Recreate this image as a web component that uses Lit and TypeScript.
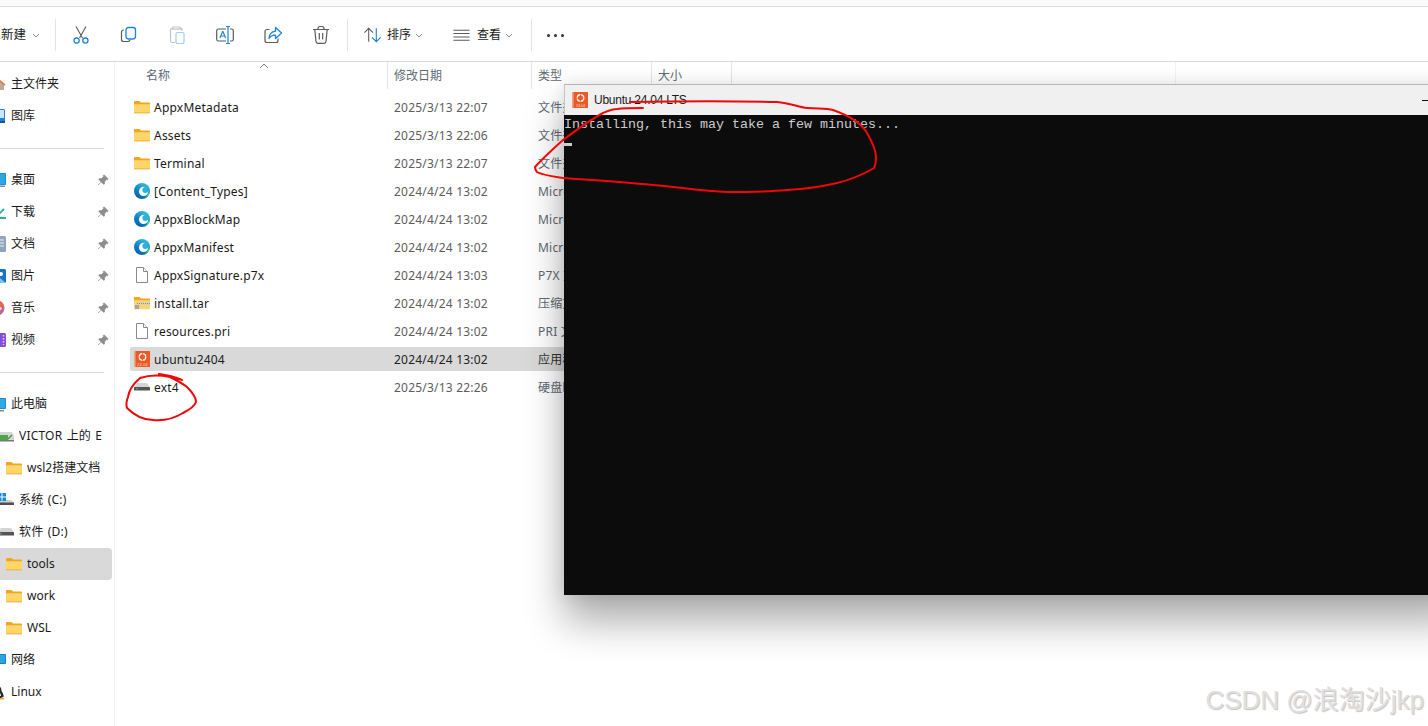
import { LitElement, html, css, svg } from "lit";
import { customElement } from "lit/decorators.js";

const folder = () => html`<svg class="ic" viewBox="0 0 16 16"><path d="M0 3.2C0 2.5.5 2 1.2 2h4.2l1.8 1.6H15c.6 0 1 .4 1 1V6H0z" fill="#f2a51e"/><path d="M0 5.2h16v8c0 .6-.4 1-1 1H1c-.6 0-1-.4-1-1z" fill="#fdd66b"/><path d="M0 13.400h16v.3c0 .4-.4.6-1 .6H1c-.6 0-1-.2-1-.6z" fill="#eba726"/></svg>`;
const edge = () => html`<svg class="ic" viewBox="0 0 16 16"><defs><linearGradient id="eg" x1=".7" y1="0" x2=".2" y2="1"><stop offset="0" stop-color="#35c1dc"/><stop offset=".5" stop-color="#1285cf"/><stop offset="1" stop-color="#0a5ca8"/></linearGradient></defs><circle cx="8" cy="8" r="8" fill="url(#eg)"/><circle cx="9.600" cy="8.400" r="4.600" fill="#fff"/><circle cx="11.400" cy="6.900" r="3" fill="#2bb0dc"/><path d="M15.900 9A8 8 0 0 1 8.500 16C11.500 15.200 13 13.800 13.600 10.700z" fill="#43d07c"/></svg>`;
const file = () => html`<svg class="ic" viewBox="0 0 16 16"><path d="M2.500.5h7l4 4v11h-11z" fill="#fff" stroke="#8a8a8a"/><path d="M9.500.5v4h4" fill="#f3f3f3" stroke="#8a8a8a"/></svg>`;
const zip = () => html`<svg class="ic" viewBox="0 0 16 16"><path d="M0 3.2C0 2.5.5 2 1.2 2h4.2l1.8 1.6H15c.6 0 1 .4 1 1V6H0z" fill="#f2a51e"/><path d="M0 5.2h16v8c0 .6-.4 1-1 1H1c-.6 0-1-.4-1-1z" fill="#fdd66b"/><path d="M3 7h13v3H3z" fill="#d8d2b8"/><path d="M3 8.500h13" stroke="#8f8f7f" stroke-dasharray="1 1"/><rect x="1" y="10" width="4" height="4" fill="#a5a5a5"/></svg>`;
const ubuntu = () => html`<svg class="ic" viewBox="0 0 16 16"><rect width="16" height="16" fill="#ea5a26"/><rect width="1.600" height="16" fill="#f2a285"/><circle cx="8.500" cy="6" r="3.300" fill="none" stroke="#fff" stroke-width="1.300" stroke-dasharray="4.400 .8"/><text x="8.500" y="14.600" font-size="4" font-family="Liberation Sans" fill="#fbd3c3" text-anchor="middle">24.04</text></svg>`;
const drive = () => html`<svg class="ic" viewBox="0 0 16 16"><path d="M3 4h10l3 4.500H0z" fill="#d4d4d4"/><rect x="0" y="8" width="16" height="3.500" rx=".6" fill="#555"/><rect x="2" y="9.300" width="1.800" height="1" fill="#3fd648"/></svg>`;

const tool = (c: unknown) => html`<svg class="tool" viewBox="0 0 20 20" fill="none" stroke-width="1.100">${c}</svg>`;
const GR = "#5a5a5a", BL = "#1e82dc";
const cut = svg`<path d="M5 1.500 11.500 13M15 1.500 8.500 13" stroke=${GR}/><circle cx="5.600" cy="15.600" r="2.600" stroke=${BL} stroke-width="1.300"/><circle cx="14.400" cy="15.600" r="2.600" stroke=${BL} stroke-width="1.300"/>`;
const copy = svg`<path d="M5 5H4.500A2 2 0 0 0 2.500 7v7.500a2 2 0 0 0 2 2H9a2 2 0 0 0 2-1.500" stroke=${GR} stroke-width="1.200"/><rect x="7" y="2.500" width="9.500" height="11.500" rx="2.400" stroke=${BL} stroke-width="1.300"/>`;
const paste = svg`<path d="M6 3.500H5A1.500 1.500 0 0 0 3.500 5v11A1.500 1.500 0 0 0 5 17.500h3M6.500 2h6a.8.8 0 0 1 .8.8V4.200H5.700V2.800A.8.8 0 0 1 6.500 2zM13.500 3.500h1.500V6" stroke="#c3c3c3" stroke-width="1.200"/><rect x="9" y="7.500" width="8" height="11" rx="1.600" stroke="#a4cdf2" stroke-width="1.200"/>`;
const rename = svg`<path d="M11 4H3.500A1.800 1.800 0 0 0 1.700 5.800v8.400A1.800 1.800 0 0 0 3.500 16H11M15 4h1.500a1.800 1.800 0 0 1 1.800 1.800v8.400a1.800 1.800 0 0 1-1.800 1.800H15" stroke=${GR} stroke-width="1.200"/><path d="M11 1.500h4M13 1.500v17M11 18.500h4M5 13l2.600-6.500h.4L10.600 13M6 11h3.600" stroke=${BL} stroke-width="1.200"/>`;
const share = svg`<path d="M6.500 4.500H4A2 2 0 0 0 2 6.500v9A2 2 0 0 0 4 17.500h9A2 2 0 0 0 15 15.500V13.500" stroke=${GR} stroke-width="1.200"/><path d="M12.500 2.500 18.500 8l-6 5.500V10.200C9.500 10 7.500 11.200 6 13.500c.2-4 2.700-6.800 6.500-7.300z" stroke=${BL} stroke-width="1.300" stroke-linejoin="round"/>`;
const trash = svg`<path d="M2 4.500h16M7 4.500V3.400A1.900 1.900 0 0 1 8.900 1.500h2.200A1.900 1.900 0 0 1 13 3.400v1.100M3.800 4.500 5 16.500a2 2 0 0 0 2 1.800h6a2 2 0 0 0 2-1.800l1.200-12M8.300 8v6.500M11.700 8v6.500" stroke=${GR} stroke-width="1.200"/>`;
const sortI = svg`<path d="M6 17V3M1.500 7.500 6 3l4.500 4.500" stroke=${GR} stroke-width="1.100"/><path d="M14 3v14M9.500 12.500 14 17l4.500-4.500" stroke=${BL} stroke-width="1.200"/>`;
const viewI = svg`<path d="M1.500 5h17M1.500 8.500h17M1.500 12h17M1.500 15.500h17" stroke=${GR} stroke-width="1.100"/>`;
const chev = html`<svg class="chev" viewBox="0 0 8 5" fill="none"><path d="M1 1l3 3 3-3" stroke="#8a8a8a"/></svg>`;

const navSvg = (c: unknown) => html`<svg class="ic" viewBox="0 0 16 16">${c}</svg>`;
const nav: Record<string, unknown> = {
  home: navSvg(svg`<path d="M2 14V8l6-5 6 5v6z" fill="#b5aca6"/><path d="M.5 8.500 8 2l7.500 6.500-1 1.200L8 4.200l-6.500 5.500z" fill="#e8763a"/>`),
  gallery: navSvg(svg`<rect x="1" y="1" width="14" height="14" rx="1.500" fill="#2a7fd0"/><rect x="10" y="2" width="4" height="8" fill="#cde3f6"/><path d="M8 13h7v2H8z" fill="#0e5aa8"/>`),
  desk: navSvg(svg`<rect y="1" width="16" height="12" rx="1" fill="#1a8cd8"/><rect x="10" y="2" width="5" height="10" fill="#2fa6e0"/><rect x="1" y="13.500" width="14" height="1.500" fill="#888899"/>`),
  down: navSvg(svg`<path d="M8 11l6-6" stroke="#1fb58f" stroke-width="1.800"/><path d="M3 14h13" stroke="#1fb58f" stroke-width="1.800"/>`),
  docs: navSvg(svg`<rect x="1" y="0" width="15" height="16" rx="1.500" fill="#8fa3bd"/><path d="M8 4h6M8 7h6M8 10h6" stroke="#eef2f7"/>`),
  pics: navSvg(svg`<rect y="1" width="16" height="14" rx="1.500" fill="#1973c7"/><circle cx="11" cy="6" r="2" fill="#fff"/><path d="M4 15l6-5 6 5z" fill="#7fc1ee"/>`),
  music: navSvg(svg`<circle cx="7" cy="8" r="7.500" fill="#c7638a"/><path d="M7 .500a7.500 7.500 0 0 1 7.400 6H8z" fill="#e86a4a"/><circle cx="10" cy="8.500" r="1.800" fill="#f4d9e2"/>`),
  video: navSvg(svg`<rect y="1" width="16" height="14" rx="1.500" fill="#8250d6"/><path d="M13.500 3v10" stroke="#e3d5fa" stroke-width="1.500" stroke-dasharray="1.500 1.500"/>`),
  pc: navSvg(svg`<rect y="2" width="16" height="11" rx="1" fill="#1a8cd8"/><rect x="9" y="3" width="6" height="9" fill="#32a8e2"/><rect x="2" y="14" width="12" height="1.500" fill="#888"/>`),
  net: navSvg(svg`<rect y="2" width="16" height="10" rx="1" fill="#1680cc"/><rect x="7" y="3" width="8" height="8" fill="#2fa3de"/><path d="M0 14.500h6" stroke="#777"/>`),
  linux: navSvg(svg`<path d="M8 2c3 0 3.500 3 3.500 5 1 1.500 2.500 4 2 6l-3 1H6L2.500 13c-.3-2 1.200-4.500 2-6C4.500 5 5 2 8 2z" fill="#2b2b2b"/><path d="M8 8c2 0 3 2 3 4H5c0-2 1-4 3-4z" fill="#f3f3f3"/><path d="M7 14h7v1.500H7z" fill="#e8a91c"/>`),
  vic: navSvg(svg`<path d="M2 4h12l2 4v5H0V8z" fill="#d5d5d5"/><rect y="7" width="10" height="5" rx=".6" fill="#4aa84a"/><path d="M10 11l4-4" stroke="#3a9a3a" stroke-width="1.300"/><rect y="12" width="16" height="1.500" fill="#777"/>`),
  win: navSvg(svg`<path d="M3 8h10l3 3v1.500H0V11z" fill="#cfcfcf"/><rect y="10.500" width="16" height="2.500" fill="#4f4f4f"/><path d="M0 1h3.500v3.500H0zM4.500 1H8v3.500H4.500zM0 5.500h3.500V9H0zM4.500 5.500H8V9H4.500z" fill="#0f8be0"/>`),
};

type NavRow = { t: string; i: unknown; lvl: number; pin?: boolean; sel?: boolean } | null;
const navRows: NavRow[] = [
  { t: "主文件夹", i: nav.home, lvl: 0 },
  { t: "图库", i: nav.gallery, lvl: 0 },
  null,
  { t: "桌面", i: nav.desk, lvl: 0, pin: true },
  { t: "下载", i: nav.down, lvl: 0, pin: true },
  { t: "文档", i: nav.docs, lvl: 0, pin: true },
  { t: "图片", i: nav.pics, lvl: 0, pin: true },
  { t: "音乐", i: nav.music, lvl: 0, pin: true },
  { t: "视频", i: nav.video, lvl: 0, pin: true },
  null,
  { t: "此电脑", i: nav.pc, lvl: 0 },
  { t: "VICTOR 上的 E", i: nav.vic, lvl: 1 },
  { t: "wsl2搭建文档", i: folder(), lvl: 2 },
  { t: "系统 (C:)", i: nav.win, lvl: 1 },
  { t: "软件 (D:)", i: drive(), lvl: 1 },
  { t: "tools", i: folder(), lvl: 2, sel: true },
  { t: "work", i: folder(), lvl: 2 },
  { t: "WSL", i: folder(), lvl: 2 },
  { t: "网络", i: nav.net, lvl: 0 },
  { t: "Linux", i: nav.linux, lvl: 0 },
];

const files: [string, () => unknown, string, string, boolean?][] = [
  ["AppxMetadata", folder, "2025/3/13 22:07", "文件夹"],
  ["Assets", folder, "2025/3/13 22:06", "文件夹"],
  ["Terminal", folder, "2025/3/13 22:07", "文件夹"],
  ["[Content_Types]", edge, "2024/4/24 13:02", "Microsoft Edge"],
  ["AppxBlockMap", edge, "2024/4/24 13:02", "Microsoft Edge"],
  ["AppxManifest", edge, "2024/4/24 13:02", "Microsoft Edge"],
  ["AppxSignature.p7x", file, "2024/4/24 13:03", "P7X 文件"],
  ["install.tar", zip, "2024/4/24 13:02", "压缩文件"],
  ["resources.pri", file, "2024/4/24 13:02", "PRI 文件"],
  ["ubuntu2404", ubuntu, "2024/4/24 13:02", "应用程序", true],
  ["ext4", drive, "2025/3/13 22:26", "硬盘映像"],
];

const pin = html`<svg class="pin" viewBox="0 0 12 12"><path d="M7 .8 11.200 5 10.300 5.800 9.700 5.500 7.600 7.500 7.400 10 6.500 10.300 1.800 5.600 2.100 4.700 4.600 4.500 6.600 2.400 6.300 1.700zM3.800 8.300 1 11" fill="#8d8d8d" stroke="#8d8d8d" stroke-width=".7"/></svg>`;

@customElement("app-root")
export class AppRoot extends LitElement {
  static styles = css`
    :host { display: block; position: relative; width: 1428px; height: 726px; overflow: hidden; background: #fff;
      font: 12px/16px "Noto Sans", "Noto Sans CJK SC", sans-serif; color: #1a1a1a; }
    * { box-sizing: border-box; }
    .ic { width: 16px; height: 16px; flex: none; display: block; }
    .strip { height: 7px; background: #fafafa; border-bottom: 1px solid #dcdcdc; }
    .toolbar { height: 55px; display: flex; align-items: center; border-bottom: 1px solid #d6d6d6; background: #fff; padding-top: 2px; }
    .new { width: 55px; display: flex; align-items: center; gap: 2px; padding-left: 1px; font-size: 12.5px; }
    .sep { width: 1px; height: 32px; background: #e4e4e4; flex: none; }
    .tbtn { width: 48px; display: flex; justify-content: center; flex: none; }
    .tb1 { margin-left: 1px; }
    .tool { width: 20px; height: 20px; display: block; }
    .spad { width: 2px; flex: none; }
    .drop { display: flex; align-items: center; flex: none; }
    .sort { width: 89px; padding-left: 15px; }
    .sort .tool { margin-right: 5px; width: 19px; }
    .view { width: 94px; padding-left: 15px; }
    .view .tool { margin-right: 6px; width: 19px; }
    .chev { width: 8px; height: 5px; margin-left: 4px; display: block; }
    .more { margin-left: 15px; display: flex; gap: 4px; }
    .more i { width: 3px; height: 3px; border-radius: 50%; background: #333; }
    .body { display: flex; height: 664px; }
    .side { width: 115px; flex: none; border-right: 1px solid #f0f0f0; padding: 6px 2px 0 0; }
    .nrow { height: 32px; display: flex; align-items: center; gap: 5px; position: relative; white-space: nowrap; overflow: hidden; border-radius: 0 4px 4px 0; }
    .nrow.sel { background: #d9d9d9; }
    .l0 .ic { margin-left: -10px; }
    .l1 .ic { margin-left: -2px; }
    .l2 .ic { margin-left: 6px; }
    .nrow span { flex: 1; overflow: hidden; }
    .l1 span { max-width: 86px; flex: none; word-spacing: 1px; letter-spacing: .2px; }
    .pin { width: 12px; height: 12px; flex: none; margin-right: 3px; }
    .ndiv { height: 32px; display: flex; align-items: center; padding-right: 8px; }
    .ndiv::after { content: ""; flex: 1; height: 1px; background: #dcdcdc; }
    .main { flex: 1; padding-left: 15px; position: relative; }
    .head { display: flex; height: 27px; color: #5e6a75; position: relative; }
    .hc { border-right: 1px solid #e5e5e5; padding: 6px 0 0 6px; flex: none; }
    .hc.n { width: 258px; padding-left: 16px; }
    .hc.d { width: 144px; }
    .hc.t { width: 120px; }
    .hc.s { width: 80px; }
    .hc.x { width: 444px; border-right-color: #f3f3f3; }
    .caret { position: absolute; left: 129px; top: 1px; width: 10px; height: 6px; }
    .rows { padding-top: 6px; display: flex; flex-direction: column; gap: 4px; letter-spacing: .21px; }
    .row { height: 24px; display: flex; align-items: center; border-radius: 2px; white-space: nowrap; width: 600px; }
    .row.sel { background: #d9d9d9; }
    .cn { width: 257px; flex: none; display: flex; align-items: center; gap: 4px; padding-left: 4px; }
    .tx { padding-top: 2px; }
    .cd { width: 151px; flex: none; color: #5d5d5d; padding-left: 7px; }
    .ct { color: #5e6a75; }
    .row.sel .cd { color: #222; }
    .row.sel .ct { color: #333; }
    .win { position: absolute; left: 564px; top: 84px; width: 900px; height: 511px; background: #f0f0f0; border-top: 1px solid #b4b4b4; border-left: 1px solid #c4c4c4;
      box-shadow: 0 26px 38px rgba(0,0,0,.33), 0 0 16px rgba(0,0,0,.10); display: flex; flex-direction: column; }
    .tbar { height: 30px; display: flex; align-items: center; padding-left: 7px; gap: 6px; flex: none; position: relative; font: 12px/16px "Liberation Sans", sans-serif; letter-spacing: -.25px; }
    .min { position: absolute; left: 857px; top: 15px; width: 10px; height: 1px; background: #111; }
    .term { flex: 1; background: #0c0c0c; color: #cccccc; font: 13.33px/16px "Liberation Mono", monospace; padding-top: 2px; margin-left: -1px; }
    .line { height: 20px; line-height: 16px; white-space: pre; }
    .cursor { width: 8px; height: 3px; background: #ccc; margin-top: 6px; }
    .ink { position: absolute; left: 0; top: 0; width: 1428px; height: 726px; pointer-events: none; }
    .mark { position: absolute; right: 4px; bottom: 11px; font: 26px/30px "Liberation Sans", "Noto Sans CJK SC", sans-serif; color: #e0e0e0;
      text-shadow: 1px 1px 1px rgba(120,120,120,.45); white-space: nowrap; }
  `;

  render() {
    return html`
      <div class="strip"></div>
      <div class="toolbar">
        <div class="new"><span>新建</span>${chev}</div>
        <div class="sep"></div>
        <div class="tbtn tb1">${tool(cut)}</div>
        <div class="tbtn">${tool(copy)}</div>
        <div class="tbtn">${tool(paste)}</div>
        <div class="tbtn">${tool(rename)}</div>
        <div class="tbtn">${tool(share)}</div>
        <div class="tbtn">${tool(trash)}</div>
        <div class="spad"></div>
        <div class="sep"></div>
        <div class="drop sort">${tool(sortI)}<span>排序</span>${chev}</div>
        <div class="drop view">${tool(viewI)}<span>查看</span>${chev}</div>
        <div class="sep"></div>
        <div class="more"><i></i><i></i><i></i></div>
      </div>
      <div class="body">
        <div class="side">
          ${navRows.map((r) => r === null
            ? html`<div class="ndiv"></div>`
            : html`<div class="nrow l${r.lvl} ${r.sel ? "sel" : ""}">${r.i}<span>${r.t}</span>${r.pin ? pin : ""}</div>`)}
        </div>
        <div class="main">
          <div class="head">
            <div class="hc n">名称</div>
            <div class="hc d">修改日期</div>
            <div class="hc t">类型</div>
            <div class="hc s">大小</div>
            <div class="hc x"></div>
            <svg class="caret" viewBox="0 0 10 6" fill="none"><path d="M1 5l4-4 4 4" stroke="#777"/></svg>
          </div>
          <div class="rows">
            ${files.map(([n, ic, d, t, sel]) => html`
              <div class="row ${sel ? "sel" : ""}">
                <div class="cn">${ic()}<span class="tx">${n}</span></div>
                <div class="cd tx">${d}</div>
                <div class="ct tx">${t}</div>
              </div>`)}
          </div>
        </div>
      </div>
      <div class="win">
        <div class="tbar">${ubuntu()}<span>Ubuntu 24.04 LTS</span><div class="min"></div></div>
        <div class="term">
          <div class="line">Installing, this may take a few minutes...</div>
          <div class="cursor"></div>
        </div>
      </div>
      <svg class="ink" viewBox="0 0 1428 726" fill="none" stroke="#f00808" stroke-width="2" stroke-linecap="round" stroke-linejoin="round">
        <path d="M630 102C680 101 740 101 777 102C790 103 798 107 807 108C818 109 826 108 833 110C850 116 862 124 867 133C874 145 876 152 876 157C876 162 875 166 874 168C862 175 850 180 837 183C820 187 805 189 787 190C765 192 745 192 727 192C700 191 680 187 653 185C620 182 590 180 563 178C550 176 542 175 537 172C535 170 535 168 535 167C543 158 553 149 563 140C575 131 590 120 603 113C608 111 612 109 617 109C625 108 635 108 643 108"/>
        <path d="M159 374C167 375 175 377 182 380C176 378 172 377 170 377C160 375 149 375 140 378C133 384 129 390 128 397C126 402 126 405 127 408C135 416 144 420 153 420C165 421 175 418 183 413C191 409 195 405 196 402C196 397 192 392 187 387C182 383 176 380 170 377"/>
      </svg>
      <div class="mark">CSDN @浪淘沙jkp</div>
    `;
  }
}
